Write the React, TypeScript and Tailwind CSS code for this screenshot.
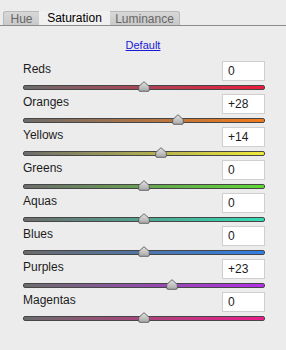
const rows = [
  { name: "Reds", value: 0, color: "#ec1c3c" },
  { name: "Oranges", value: 28, color: "#f27a1a" },
  { name: "Yellows", value: 14, color: "#f0ea3a" },
  { name: "Greens", value: 0, color: "#5fd936" },
  { name: "Aquas", value: 0, color: "#33dcb4" },
  { name: "Blues", value: 0, color: "#2f7fe6" },
  { name: "Purples", value: 23, color: "#b52ee8" },
  { name: "Magentas", value: 0, color: "#ec1c8c" },
];

const Thumb = () => (
  <svg width="13" height="11" viewBox="0 0 13 11">
    <defs>
      <linearGradient id="tg" x1="0" y1="0" x2="0" y2="1">
        <stop offset="0" stopColor="#e4e4e4" />
        <stop offset="1" stopColor="#a8a8a8" />
      </linearGradient>
    </defs>
    <path
      d="M6.5 0.7 L11.8 5.5 L11.8 9 Q11.8 10.3 10.5 10.3 L2.5 10.3 Q1.2 10.3 1.2 9 L1.2 5.5 Z"
      fill="url(#tg)"
      stroke="#5a5a5a"
      strokeWidth="0.9"
    />
  </svg>
);

const Row = ({
  name,
  value,
  color,
}: {
  name: string;
  value: number;
  color: string;
}) => {
  const pct = (value + 100) / 200;
  return (
    <div className="flex flex-col">
      <div className="flex items-end justify-between">
        <span className="pb-[3px] text-[12px] text-[#1c1c1c]">{name}</span>
        <div className="flex h-[20px] w-[43px] items-center border border-[#cfcfcf] bg-white pl-[5px] text-[12px] text-[#1c1c1c]">
          {value > 0 ? `+${value}` : value}
        </div>
      </div>
      <div className="relative mt-[4px] h-[5px]">
        <div
          className="h-full rounded-[2px] border border-[#464646]"
          style={{ background: `linear-gradient(to right, #6c6c6c, ${color})` }}
        />
        <div
          className="absolute top-[-4px] -translate-x-1/2"
          style={{ left: `${pct * 100}%` }}
        >
          <Thumb />
        </div>
      </div>
    </div>
  );
};

const App = () => {
  return (
    <div
      className="h-[350px] w-[286px] overflow-hidden bg-[#ececec]"
      style={{ fontFamily: '"Liberation Sans", Arial, sans-serif' }}
    >
      {/* Tabs */}
      <div className="flex items-end border-b border-[#8c8c8c] px-[3px] pt-[11px]">
        <div className="flex h-[14px] w-[36px] items-center justify-center rounded-tl-[3px] border-t border-l border-[#b8b8b8] bg-gradient-to-b from-[#d8d8d8] to-[#c9c9c9] text-[12px] text-[#666]">
          Hue
        </div>
        <div className="flex h-[14px] w-[71px] items-center justify-center bg-[#f0f0f0] text-[12px] text-black">
          Saturation
        </div>
        <div className="flex h-[14px] w-[70px] items-center justify-center rounded-tr-[3px] border-t border-r border-[#b8b8b8] bg-gradient-to-b from-[#d8d8d8] to-[#c9c9c9] text-[12px] text-[#666]">
          Luminance
        </div>
      </div>

      <div className="mt-[11px] flex justify-center">
        <span className="text-[11px] text-[#1a1ad6] underline">Default</span>
      </div>

      <div className="mt-[6px] flex flex-col gap-[3px] pr-[21px] pl-[23px]">
        {rows.map((r) => (
          <Row key={r.name} {...r} />
        ))}
      </div>
    </div>
  );
};

export default App;
